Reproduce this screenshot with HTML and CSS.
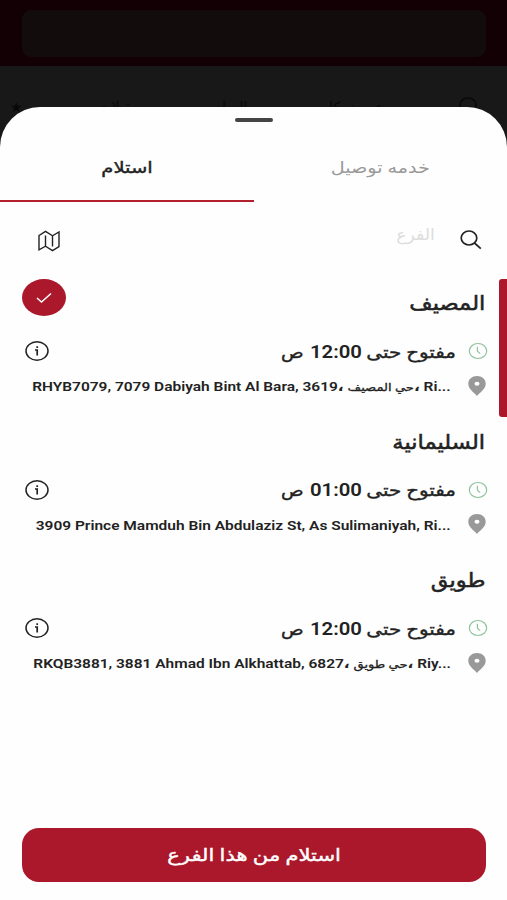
FILE: index.html
```
<!doctype html>
<html lang="ar" dir="rtl">
<head>
    <meta charset="utf-8">
    <meta name="viewport" content="width=device-width, initial-scale=1">
    <title>استلام</title>
    <link rel="stylesheet" href="styles.css">
</head>
<body>
    <!-- Icons -->
    <svg class="sprite" aria-hidden="true">
        <symbol id="clock" viewBox="0 0 20 18">
            <ellipse cx="10" cy="9" rx="8.7" ry="7.5"/>
            <path d="M9.400 4.800v4.400l2.800 2.400"/>
        </symbol>
        <symbol id="pin" viewBox="0 0 18 20">
            <path d="M9 0C4 0 .3 3.200.3 7.700c0 5.300 5.700 8.600 8.700 12.200 3-3.600 8.700-6.900 8.700-12.200C17.700 3.200 14 0 9 0z"/>
            <ellipse class="hole" cx="9" cy="7.700" rx="2.500" ry="2"/>
        </symbol>
        <symbol id="info" viewBox="0 0 24 20">
            <ellipse cx="12" cy="10" rx="11" ry="9.200"/>
            <path class="info-mark" d="M10 9h2.200v5.600M12.200 5.200v1.700"/>
        </symbol>
    </svg>

    <header class="topbar">
        <div class="topbar-field"></div>
    </header>
    <nav class="menu">
        <svg class="menu-search" viewBox="0 0 22 20"><ellipse cx="9" cy="8" rx="8" ry="7"/></svg>
        <span>عروض كل</span>
        <span>السله</span>
        <span>مقبلات</span>
        <span>★</span>
    </nav>

    <section class="sheet">
        <div class="handle"></div>

        <div class="tabs">
            <div class="tab"><span class="fit tab-delivery">خدمه توصيل</span></div>
            <div class="tab active"><span class="fit tab-pickup">استلام</span></div>
        </div>

        <div class="search">
            <svg class="search-icon" viewBox="0 0 22 20"><ellipse cx="9" cy="8" rx="7.800" ry="7"/><path d="M14.500 13l6.300 5.700"/></svg>
            <span class="placeholder"><span class="fit">الفرع</span></span>
            <svg class="map-icon" viewBox="0 0 22 22"><path d="M1 5.500L7.500 1.300l7 4.500L21 2v14.500l-6.500 4.200-7-4.500L1 19.800zM7.500 5.500v10.700M14.500 5.800v10.700"/></svg>
        </div>

        <div class="branches">
            <article class="branch">
                <div class="row name">
                    <h2 class="fit">المصيف</h2>
                    <span class="check"><svg viewBox="0 0 16 12"><path d="M1 6l4.500 4L15 1.500"/></svg></span>
                </div>
                <div class="row status">
                    <svg class="clock"><use href="#clock"/></svg>
                    <span class="status-text"><span class="open">مفتوح حتى</span><b>12:00</b><span class="am">ص</span></span>
                    <svg class="info"><use href="#info"/></svg>
                </div>
                <div class="row place">
                    <svg class="pin"><use href="#pin"/></svg>
                    <span class="address" dir="ltr">RHYB7079, 7079 Dabiyah Bint Al Bara, 3619، <i>حي المصيف</i>، Ri...</span>
                </div>
            </article>

            <article class="branch">
                <div class="row name">
                    <h2 class="fit">السليمانية</h2>
                </div>
                <div class="row status">
                    <svg class="clock"><use href="#clock"/></svg>
                    <span class="status-text"><span class="open">مفتوح حتى</span><b>01:00</b><span class="am">ص</span></span>
                    <svg class="info"><use href="#info"/></svg>
                </div>
                <div class="row place">
                    <svg class="pin"><use href="#pin"/></svg>
                    <span class="address" dir="ltr">3909 Prince Mamduh Bin Abdulaziz St, As Sulimaniyah, Ri...</span>
                </div>
            </article>

            <article class="branch">
                <div class="row name">
                    <h2 class="fit">طويق</h2>
                </div>
                <div class="row status">
                    <svg class="clock"><use href="#clock"/></svg>
                    <span class="status-text"><span class="open">مفتوح حتى</span><b>12:00</b><span class="am">ص</span></span>
                    <svg class="info"><use href="#info"/></svg>
                </div>
                <div class="row place">
                    <svg class="pin"><use href="#pin"/></svg>
                    <span class="address" dir="ltr">RKQB3881, 3881 Ahmad Ibn Alkhattab, 6827، <i>حي طويق</i>، Riy...</span>
                </div>
            </article>

            <div class="scrollbar"></div>
        </div>

        <button class="submit" type="button"><span class="fit submit-text">استلام من هذا الفرع</span></button>
    </section>
</body>
</html>
```

FILE: styles.css
```
* {
    box-sizing: border-box;
}

body {
    margin: 0;
    position: relative;
    height: 900px;
    overflow: hidden;
    background: #171817;
    color: #222;
    font-family: Roboto, 'DejaVu Sans', sans-serif;
}

svg {
    display: block;
    flex: none;
    fill: none;
    stroke: #222;
    stroke-width: 1.5;
}

.sprite {
    position: absolute;
    width: 0;
    height: 0;
}

/* Dimmed page behind the sheet */
.topbar {
    height: 66px;
    padding: 10px 21px 0 22px;
    background: #120004;
}

.topbar-field {
    height: 47px;
    border-radius: 9px;
    background: #130c0c;
}

.menu {
    display: flex;
    justify-content: space-between;
    padding: 31px 26px 0 10px;
    color: #080808;
    font-size: 14px;
    line-height: 20px;
}

.menu-search {
    width: 22px;
    height: 20px;
    stroke: #080808;
}

/* Bottom sheet */
.sheet {
    position: absolute;
    top: 107px;
    right: 0;
    bottom: 0;
    left: 0;
    display: flex;
    flex-direction: column;
    border-radius: 40px 40px 0 0;
    background: #fefefe;
}

.handle {
    width: 38px;
    height: 4px;
    margin: 11px auto 0;
    border-radius: 2px;
    background: #454545;
}

.fit {
    display: inline-block;
    white-space: nowrap;
}

.tabs {
    display: flex;
    height: 80px;
}

.tab {
    flex: 1;
    padding-top: 34px;
    text-align: center;
    font-size: 16px;
    line-height: 24px;
    color: #999;
}

.tab-delivery {
    transform: scaleX(1.2);
}

.tab.active {
    border-bottom: 2px solid #b5202f;
    color: #222;
}

.tab-pickup {
    transform: scaleX(1.22);
    -webkit-text-stroke: .4px;
}

.search {
    display: flex;
    align-items: center;
    height: 74px;
    padding: 2px 25px 0 38px;
}

.search-icon {
    width: 22px;
    height: 20px;
    margin-bottom: 1px;
    stroke-width: 1.7;
}

.placeholder {
    flex: 1;
    padding: 0 25px 11px 0;
    font-size: 16px;
    line-height: 20px;
    color: #ddd;
}

.placeholder .fit {
    transform: scaleX(1.08);
    transform-origin: right center;
}

.map-icon {
    width: 22px;
    height: 22px;
    margin-top: 2px;
    stroke-width: 1.4;
}

.branches {
    position: relative;
    flex: 1;
    padding-top: 3px;
}

.branch {
    height: 138.5px;
    padding: 0 20px 0 22px;
}

.row {
    display: flex;
    align-items: center;
}

.name {
    height: 48px;
    justify-content: space-between;
}

.name h2 {
    margin: 0 2px 0 0;
    font-size: 20px;
    font-weight: normal;
    line-height: 30px;
    transform: scaleX(1.13);
    transform-origin: right center;
    -webkit-text-stroke: .5px;
}

.check {
    display: flex;
    align-items: center;
    justify-content: center;
    width: 44px;
    height: 37px;
    margin-bottom: 11px;
    border-radius: 50%;
    background: #ab182b;
}

.check svg {
    width: 16px;
    height: 12px;
    stroke: #fff;
}

.status {
    height: 48px;
}

.clock {
    width: 20px;
    height: 18px;
    margin-right: -1px;
    stroke: #8fc49d;
    stroke-width: 1.2;
}

.status-text {
    display: flex;
    flex: 1;
    padding: 1px 12px 0 0;
    font-size: 17px;
    line-height: 24px;
    white-space: nowrap;
}

.status-text span,
.status-text b {
    transform: scaleX(1.17);
    transform-origin: right center;
    -webkit-text-stroke: .4px;
}

/* each part reserves its stretched width */
.status-text .open {
    width: 94px;
}

.status-text b {
    width: 58px;
    font-size: 18px;
    font-weight: 600;
    transform: scaleX(1.13);
    -webkit-text-stroke: 0;
}

.status-text .am {
    transform: scaleX(1.1);
}

.info {
    width: 24px;
    height: 20px;
    margin-left: 3px;
}

.info-mark {
    stroke-width: 1.7;
}

.place {
    height: 23px;
}

.pin {
    width: 18px;
    height: 20px;
    margin: 0 1px 2px 0;
    fill: #999;
    stroke: none;
}

.hole {
    fill: #fff;
}

.address {
    margin-right: 17px;
    padding-top: 2px;
    font-size: 13px;
    font-weight: 600;
    line-height: 20px;
    white-space: nowrap;
    transform: scaleX(1.19);
    transform-origin: right center;
}

.address i {
    font-style: normal;
    font-weight: normal;
    font-size: 11px;
    -webkit-text-stroke: .3px;
}

.scrollbar {
    position: absolute;
    top: 3px;
    right: 0;
    width: 8px;
    height: 138px;
    border-radius: 3px 0 0 3px;
    background: #ab182b;
}

.submit {
    height: 54px;
    margin: 0 21px 18px 22px;
    padding: 0;
    border: 0;
    border-radius: 17px;
    background: #ab182b;
    color: #fff;
    font: 17px/54px Roboto, 'DejaVu Sans', sans-serif;
}

.submit-text {
    transform: scaleX(1.24);
    -webkit-text-stroke: .4px;
}
```
